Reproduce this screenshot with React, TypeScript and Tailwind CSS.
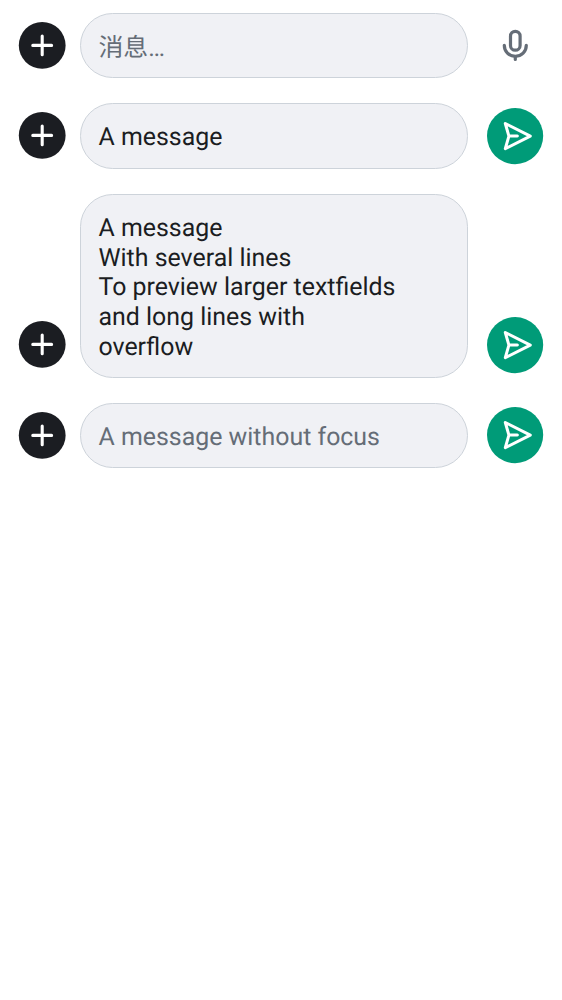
const PlusButton = ({ lift }: { lift: string }) => (
  <button aria-label="Add" className={`block size-[46.8px] shrink-0 ${lift}`}>
    <svg viewBox="0 0 46.8 46.8" className="block size-full overflow-visible" fill="none" stroke="#fff" strokeWidth="3.1" strokeLinecap="round">
      <circle cx="23.2" cy="23.4" r="23.4" fill="#1b1d22" stroke="none" />
      <path d="M23.2 14V32.8M13.8 23.4H32.6" />
    </svg>
  </button>
);

const SendButton = () => (
  <button aria-label="Send" className="mb-[4.8px] block size-[56.2px] shrink-0">
    <svg viewBox="0 0 56.2 56.2" className="block size-full overflow-visible" fill="none" stroke="#fff" strokeWidth="3" strokeLinecap="round" strokeLinejoin="round">
      <circle cx="28.1" cy="28.1" r="28.1" fill="#009b78" stroke="none" />
      <path d="M18.3 15.5L43.3 28.1L18.3 40.7L21.9 28.1ZM22 28.1H30.4" />
    </svg>
  </button>
);

const MicButton = () => (
  <button aria-label="Record" className="mb-[4.5px] block size-[56.2px] shrink-0">
    <svg viewBox="0 0 56.2 56.2" className="block size-full" fill="none" stroke="#656d77" strokeWidth="3.2" strokeLinecap="round">
      <rect x="23.5" y="14.3" width="9.6" height="18.9" rx="4.8" />
      <path d="M17.3 28.3C17.3 34.8 22 39.3 28.3 39.3S39.3 34.8 39.3 28.3M28.3 39.4V42.4" />
    </svg>
  </button>
);

type ComposerProps = { lines: string[]; size: string; lift?: string; muted?: boolean; recording?: boolean };

const Composer = ({ lines, size, lift = "mb-[9.4px]", muted = false, recording = false }: ComposerProps) => (
  <div className="flex items-end">
    <PlusButton lift={lift} />
    <div
      className={`ml-[14.4px] mr-[18.8px] w-[388.4px] rounded-[32.6px] border border-[#cdd3da] bg-[#f0f1f5] pl-[17.6px] text-[24.92px] leading-[29.7px] [text-rendering:geometricPrecision] ${size} ${
        recording ? "pt-[20px]" : "pt-[19px]"
      } ${muted ? "text-[#656d77]" : "text-[#1b1d22]"}`}
    >
      {lines.map((line) => (
        <div key={line} className="h-[29.7px] whitespace-nowrap">
          {line}
        </div>
      ))}
    </div>
    {recording ? <MicButton /> : <SendButton />}
  </div>
);

export default function App() {
  return (
    <main className="flex min-h-screen w-[562px] flex-col gap-[25px] bg-white pl-[18.7px] pt-[13px] font-['Roboto','Noto_Sans_CJK_SC',sans-serif]">
      <Composer size="h-[65px]" lines={["消息…"]} muted recording />
      <Composer size="h-[66px]" lift="mb-[9.8px]" lines={["A message"]} />
      <Composer
        size="h-[184px]"
        lift="mb-[10px]"
        lines={["A message", "With several lines", "To preview larger textfields", "and long lines with", "overflow"]}
      />
      <Composer size="h-[65px]" lines={["A message without focus"]} muted />
    </main>
  );
}
